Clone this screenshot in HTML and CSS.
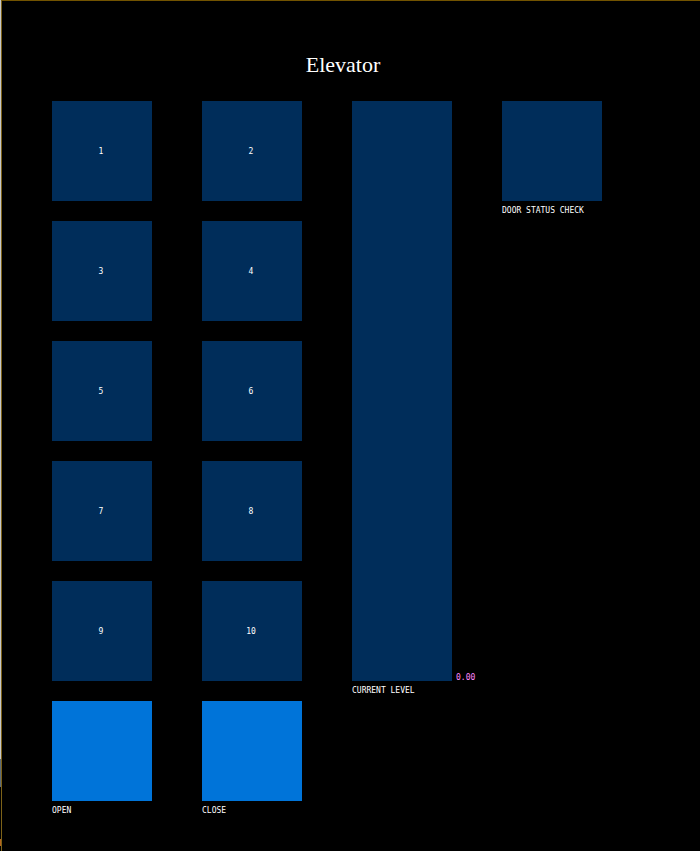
FILE: index.html
```html
<!DOCTYPE html>
<html lang="en">
<head>
<meta charset="utf-8">
<meta name="viewport" content="width=device-width, initial-scale=1">
<title>Elevator</title>
<link rel="stylesheet" href="styles.css">
</head>
<body>
<main class="window">
  <h1 class="title">Elevator</h1>
  <div class="panel">
    <div class="keypad">
      <button class="key" type="button">1</button>
      <button class="key" type="button">2</button>
      <button class="key" type="button">3</button>
      <button class="key" type="button">4</button>
      <button class="key" type="button">5</button>
      <button class="key" type="button">6</button>
      <button class="key" type="button">7</button>
      <button class="key" type="button">8</button>
      <button class="key" type="button">9</button>
      <button class="key" type="button">10</button>
      <div class="control">
        <button class="key key-door" type="button" id="open"></button>
        <label class="caption" for="open">OPEN</label>
      </div>
      <div class="control">
        <button class="key key-door" type="button" id="close"></button>
        <label class="caption" for="close">CLOSE</label>
      </div>
    </div>
    <div class="control">
      <div class="level-row">
        <input class="level-track" type="range" id="level" min="0" max="10" value="0">
        <output class="level-value" for="level">0.00</output>
      </div>
      <label class="caption" for="level">CURRENT LEVEL</label>
    </div>
    <div class="control">
      <input class="status" type="checkbox" id="status">
      <label class="caption" for="status">DOOR STATUS CHECK</label>
    </div>
  </div>
</main>
</body>
</html>
```

FILE: styles.css
```css
* {
  box-sizing: border-box;
}

body {
  margin: 0;
  padding-left: 1px;
  min-height: 100vh;
  display: flex;
  background: linear-gradient(#c8c8c8 759px, #5f6c78 759px, #5f6c78 787px, #000 787px, #000 839px, #b5651d 839px, #b5651d 846px, #000 846px);
  color: #fff;
  font-family: "DejaVu Sans Mono", monospace;
  font-size: 8px;
  line-height: 12px;
}

.window {
  flex: 1;
  padding: 50px 16px 34px 0;
  background: #000;
  border-top: 1px solid #725300;
  border-left: 1px solid #7d6218;
}

.title {
  margin: 0 0 22px;
  font: 22px/28px "Liberation Serif", serif;
  text-align: center;
}

.panel {
  display: flex;
  align-items: flex-start;
  gap: 50px;
  padding-left: 50px;
}

.keypad {
  display: grid;
  grid-template-columns: repeat(2, 100px);
  grid-template-rows: repeat(5, 100px);
  gap: 20px 50px;
}

.key,
.status {
  appearance: none;
  display: block;
  width: 100px;
  height: 100px;
  margin: 0;
  padding: 2px 2px 0 0;
  border: 0;
  background: #002d5a;
  color: #fff;
  font: inherit;
}

.key-door {
  background: #0074d9;
}

.control {
  width: 100px;
}

.caption {
  display: block;
  margin-top: 4px;
  white-space: nowrap;
}

.level-row {
  display: flex;
  align-items: flex-end;
  gap: 4px;
}

.level-track {
  appearance: none;
  writing-mode: vertical-lr;
  direction: rtl;
  flex: none;
  width: 100px;
  height: 580px;
  margin: 0;
  background: #002d5a;
}

.level-track::-webkit-slider-thumb {
  appearance: none;
  width: 100px;
  height: 0;
}

.level-value {
  color: #ff88ff;
  line-height: 6px;
}
```
